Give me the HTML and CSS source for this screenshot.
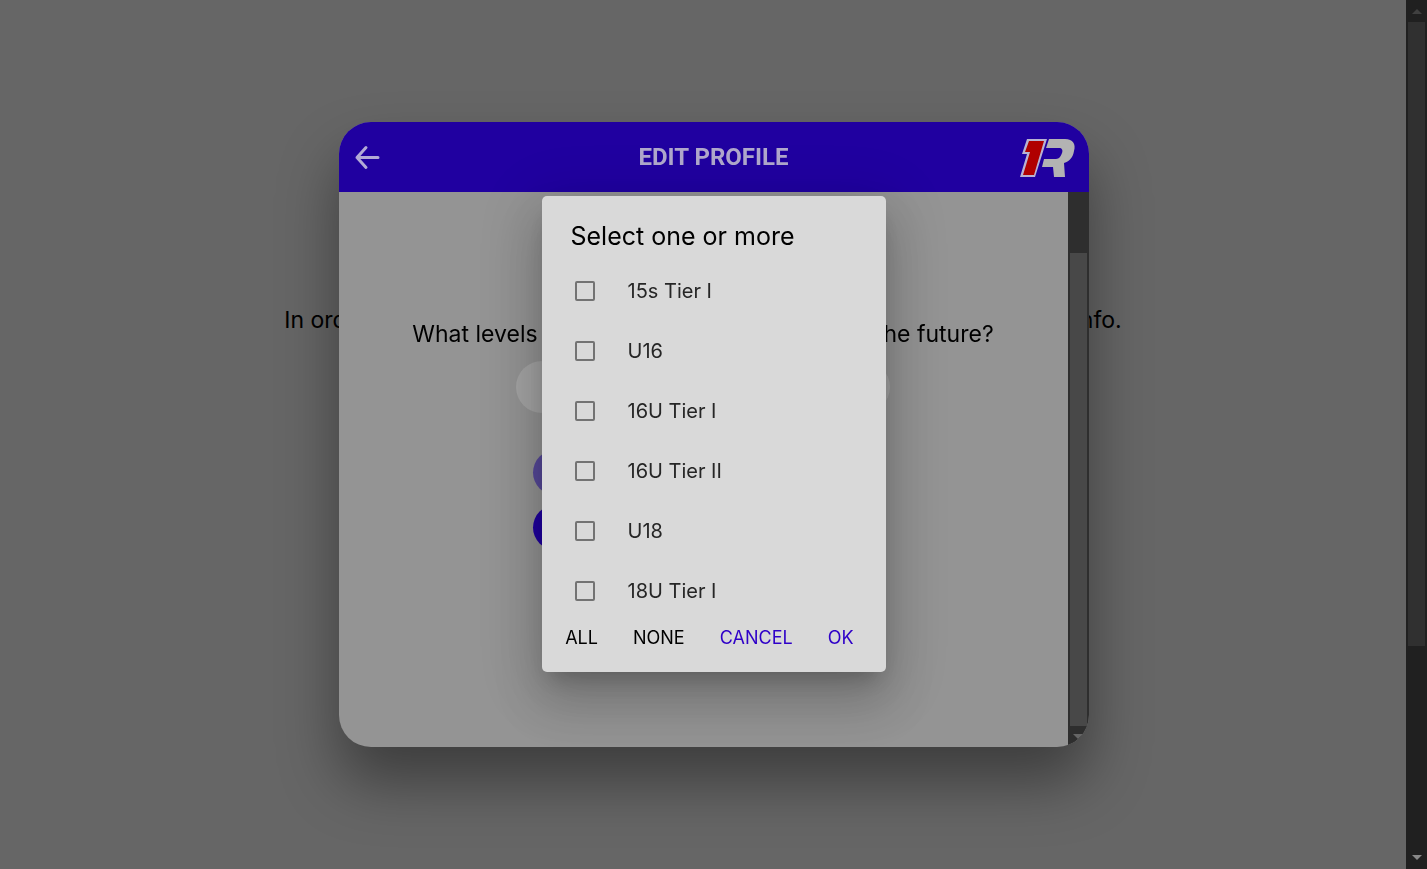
FILE: index.html
```html
<!DOCTYPE html>
<html lang="en">
<head>
    <meta charset="UTF-8">
    <meta name="viewport" content="width=device-width, initial-scale=1.0">
    <title>Edit Profile</title>
    <link rel="stylesheet" href="styles.css">
</head>
<body>
    <div class="page">
        <main class="page-content">
            <p class="page-text">In order to get the most out of your account, we need some more profile info.</p>
        </main>
        <div class="scrollbar page-scrollbar">
            <span class="arrow arrow-up"></span>
            <span class="thumb"></span>
            <span class="arrow arrow-down"></span>
        </div>
    </div>

    <div class="overlay">
        <section class="modal">
            <header class="toolbar">
                <button type="button" class="back-btn" aria-label="Back">
                    <svg viewBox="0 0 26 26" width="26" height="26">
                        <path d="M12 3.500 L3 13.500 L12 23.500 M3 13.500 H24" fill="none" stroke="#b3aad6" stroke-width="3" stroke-linecap="round" stroke-linejoin="round"/>
                    </svg>
                </button>
                <h1 class="toolbar-title">EDIT PROFILE</h1>
                <svg class="logo" viewBox="0 0 56 40" width="56" height="40">
                    <path d="M7 2 H27 L15 40 H0 L7 17 H2 Z" fill="#b9b2d2"/>
                    <path d="M9 4 H24 L14 38 H3 L10 15 H5 Z" fill="#b00000"/>
                    <path d="M29 2 H45 C53 2 56 7 54 14 C53 20 50 24 44 26 L45 40 H34 L33 30 H22 L24 22 H36 C39 22 41 19 42 16 C43 13 42 11 39 11 H26 Z" fill="#b3b3b3"/>
                </svg>
            </header>
            <div class="modal-body">
                <form class="modal-content">
                    <label class="question" for="levels">What levels are you interested in joining in the future?</label>
                    <input type="text" id="levels" class="level-input" readonly>
                    <button type="button" class="pill-btn muted" aria-label="Save"></button>
                    <button type="button" class="pill-btn" aria-label="Skip"></button>
                </form>
                <div class="scrollbar modal-scrollbar">
                    <span class="thumb"></span>
                    <span class="arrow arrow-down"></span>
                </div>
            </div>
        </section>
    </div>

    <div class="overlay">
        <div class="alert" role="dialog" aria-labelledby="alertTitle">
            <h2 class="alert-title" id="alertTitle">Select one or more</h2>
            <div class="alert-list">
                <label class="option"><input type="checkbox"> 15s Tier I</label>
                <label class="option"><input type="checkbox"> U16</label>
                <label class="option"><input type="checkbox"> 16U Tier I</label>
                <label class="option"><input type="checkbox"> 16U Tier II</label>
                <label class="option"><input type="checkbox"> U18</label>
                <label class="option"><input type="checkbox"> 18U Tier I</label>
            </div>
            <div class="alert-buttons">
                <button type="button" class="alert-btn dark">ALL</button>
                <button type="button" class="alert-btn dark">NONE</button>
                <button type="button" class="alert-btn">CANCEL</button>
                <button type="button" class="alert-btn">OK</button>
            </div>
        </div>
    </div>
</body>
</html>
```

FILE: styles.css
```css
* {
    box-sizing: border-box;
}
body {
    margin: 0;
    height: 100vh;
    overflow: hidden;
    font-family: Inter, Roboto, sans-serif;
    color: #000;
    background-color: #666;
}
button {
    font-family: inherit;
    border: none;
    background: none;
    cursor: pointer;
}

/* page behind the modal */
.page {
    display: flex;
    height: 100vh;
}
.page-content {
    flex: 1;
    padding-top: 304px;
}
.page-text {
    margin: 0;
    font-size: 23px;
    line-height: 32px;
    text-align: center;
    white-space: nowrap;
}

/* scrollbars */
.scrollbar {
    display: flex;
    flex-direction: column;
    align-items: center;
    width: 21px;
}
.page-scrollbar {
    padding: 9px 0;
    background-color: #202020;
}
.page-scrollbar .thumb {
    width: 17px;
    margin: 8px 0 auto;
    flex: 0 1 624px;
    background-color: #303030;
}
.arrow {
    border: 5px solid transparent;
}
.arrow-up {
    border-top: none;
    border-bottom-color: #404040;
}
.arrow-down {
    border-bottom: none;
    border-top-color: #888;
}

.overlay {
    position: fixed;
    inset: 0;
    display: flex;
    align-items: center;
    justify-content: center;
    padding-bottom: 1px;
}

/* profile modal */
.modal {
    display: flex;
    flex-direction: column;
    width: 750px;
    height: 625px;
    border-radius: 32px;
    overflow: hidden;
    background-color: #949494;
    box-shadow: 0 35px 60px rgba(0, 0, 0, 0.4);
}
.toolbar {
    display: grid;
    grid-template-columns: 56px 1fr 56px;
    align-items: center;
    height: 70px;
    padding: 0 13px;
    background-color: #2000a0;
}
.back-btn {
    display: flex;
    padding: 2px;
}
.toolbar-title {
    margin: 0;
    font-family: Roboto, sans-serif;
    font-size: 24px;
    font-weight: bold;
    text-align: center;
    color: #b0a8cc;
}
.modal-body {
    display: flex;
    flex: 1;
}
.modal-content {
    display: flex;
    flex: 1;
    flex-direction: column;
    align-items: center;
    padding-top: 126px;
}
.question {
    font-size: 23px;
    line-height: 32px;
    white-space: nowrap;
}
.level-input {
    width: 374px;
    height: 52px;
    margin: 11px 0 37px;
    border: none;
    border-radius: 26px;
    background-color: #a4a4a4;
}
.pill-btn {
    width: 340px;
    height: 45px;
    margin-bottom: 10px;
    border-radius: 23px;
    background-color: #2000a0;
}
.pill-btn.muted {
    background-color: #57499a;
}
.modal-scrollbar {
    padding: 61px 0 8px;
    background-color: #2e2e2e;
}
.modal-scrollbar .thumb {
    flex: 1;
    width: 17px;
    margin-bottom: 8px;
    background-color: #484848;
}
.modal-scrollbar .arrow-down {
    border-top-color: #666;
}

/* level picker */
.alert {
    width: 344px;
    border-radius: 5px;
    background-color: #d9d9d9;
    box-shadow: 0 14px 19px -9px rgba(0, 0, 0, 0.2), 0 30px 48px 4px rgba(0, 0, 0, 0.14), 0 11px 58px 10px rgba(0, 0, 0, 0.12);
}
.alert-title {
    margin: 0;
    padding: 24px 29px 9px;
    font-size: 25px;
    font-weight: normal;
    line-height: 32px;
}
.option {
    display: flex;
    align-items: center;
    gap: 33px;
    height: 60px;
    padding: 0 33px;
    font-size: 20px;
    color: #262626;
}
.option input {
    appearance: none;
    width: 20px;
    height: 20px;
    margin: 0;
    border: 2px solid #737373;
    border-radius: 2px;
}
.option input:checked {
    border-color: #2f00c8;
    background-color: #2f00c8;
}
.alert-buttons {
    display: flex;
    justify-content: flex-end;
    gap: 11px;
    padding: 1px 20px 18px 10px;
}
.alert-btn {
    padding: 0 12px;
    font-size: 18px;
    line-height: 32px;
    color: #2f00c8;
}
.alert-btn.dark {
    color: #000;
}
```
